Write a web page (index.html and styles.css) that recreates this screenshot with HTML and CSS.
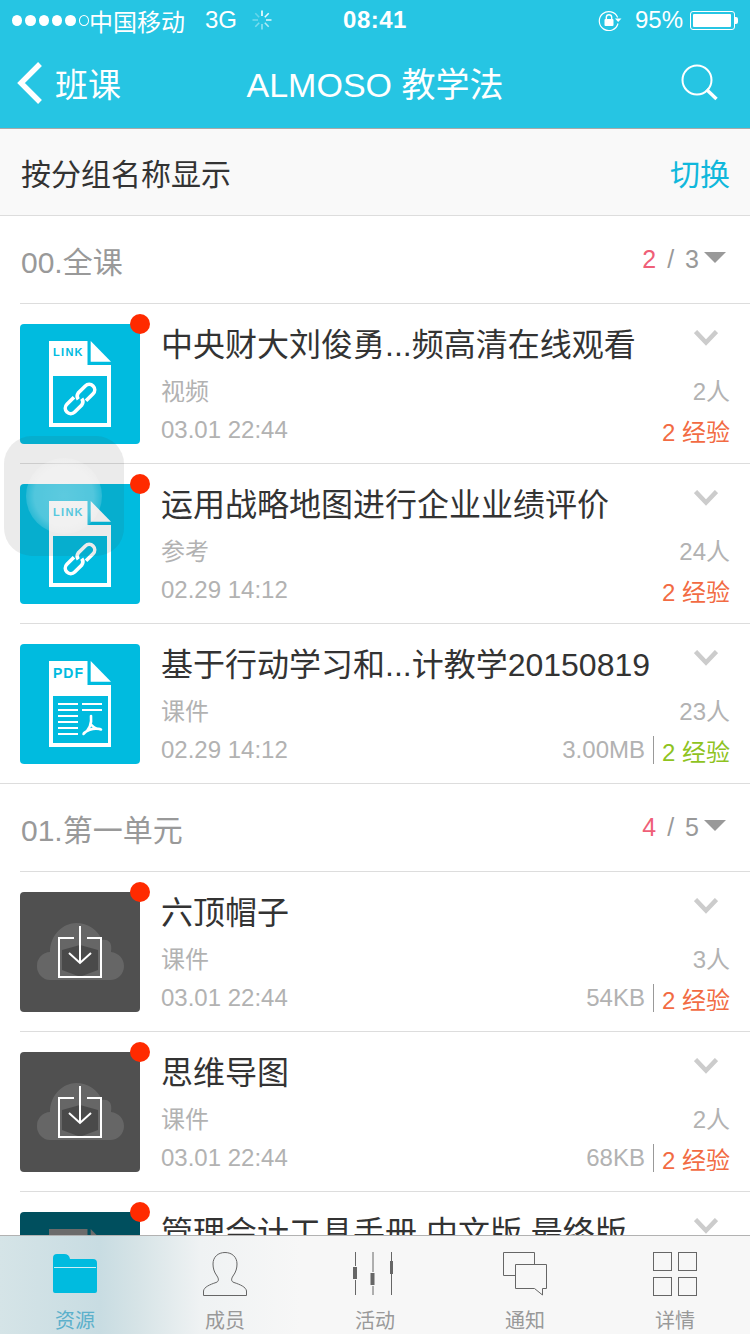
FILE: index.html
```html
<!DOCTYPE html>
<html lang="zh">
<head>
<meta charset="utf-8">
<title>ALMOSO 教学法</title>
<link rel="stylesheet" href="styles.css">
</head>
<body>
<svg class="defs" width="0" height="0" aria-hidden="true">
  <symbol id="link" viewBox="0 0 120 120">
    <path fill="#fff" d="M29 17H67.5V41H91V103H29z"/>
    <path fill="#fff" d="M70.7 17L91 37.7H70.7z"/>
    <rect x="33" y="52" width="54" height="47" fill="#00bbdf"/>
    <text x="33" y="32" class="ft ft-link">LINK</text>
    <g transform="translate(60 75) rotate(-45)" fill="none" stroke="#fff" stroke-width="3.6">
      <path d="M-3 -5.5H-13A5.5 5.5 0 0 0 -13 5.5H-3A5.5 5.5 0 0 0 1.5 1"/>
      <path d="M3 5.5H13A5.5 5.5 0 0 0 13 -5.5H3A5.5 5.5 0 0 0 -1.5 -1"/>
    </g>
  </symbol>
  <symbol id="pdf" viewBox="0 0 120 120">
    <path fill="#fff" d="M29 17H67.5V41H91V103H29z"/>
    <path fill="#fff" d="M70.7 17L91 37.7H70.7z"/>
    <rect x="33" y="52" width="55" height="47" fill="#00bbdf"/>
    <text x="33" y="34" class="ft ft-pdf">PDF</text>
    <path stroke="#fff" stroke-width="2" d="M38 60H58M62 60H82M38 66H58M62 66H82M38 72H58M38 78H58M38 84H58M38 90H58"/>
    <path fill="none" stroke="#fff" stroke-width="2.6" stroke-linecap="round" d="M71 72C72 80 69 86 63.5 90M71.5 81C74 84 77 85 81 85.5M64 89C69 85 75 84 80 85"/>
  </symbol>
  <symbol id="cloud" viewBox="0 0 120 120">
    <path fill="#666" d="M30 88A13.5 13.5 0 0 1 17 74 13.5 13.5 0 0 1 30 60C30 42 44 31 56 31 68 31 78 38 82 48 94 46 91 60 91 60 99 61 104 67 104 74 104 82 98 88 90 88z"/>
    <path fill="#4a4a4a" d="M42 58L60 53 78 58V78L62 84H58L42 78z"/>
    <path fill="none" stroke="#fff" stroke-width="2" d="M54 46H39V85H81V46H67"/>
    <path fill="none" stroke="#fff" stroke-width="2" d="M60 34V71M49 61L60 71 71 61"/>
  </symbol>
  <symbol id="chev" viewBox="0 0 24 16">
    <path fill="none" stroke="#ccc" stroke-width="4.5" d="M1.5 1.5L12 12.5 22.5 1.5"/>
  </symbol>
</svg>

<div class="screen">
  <header class="top">
    <div class="status">
      <div class="st-left">
        <span class="dots"><i></i><i></i><i></i><i></i><i></i><i class="off"></i></span>
        <span class="carrier">中国移动</span>
        <span class="net">3G</span>
        <svg class="spin" width="20" height="20" viewBox="0 0 20 20" fill="none" stroke="#fff" stroke-width="1.6">
          <path d="M10 0.5V6"/><path opacity=".9" d="M16.7 3.3L12.8 7.2"/><path opacity=".8" d="M19.5 10H14"/><path opacity=".65" d="M16.7 16.7L12.8 12.8"/><path opacity=".5" d="M10 19.5V14"/><path opacity=".4" d="M3.3 16.7L7.2 12.8"/><path opacity=".35" d="M0.5 10H6"/><path opacity=".3" d="M3.3 3.3L7.2 7.2"/>
        </svg>
      </div>
      <div class="st-time">08:41</div>
      <div class="st-right">
        <svg width="24" height="21" viewBox="0 0 24 21" fill="none">
          <path stroke="#fff" stroke-width="1.2" d="M20 13.5A9.5 9.5 0 1 1 19.6 7.5"/>
          <path fill="#fff" d="M17 8.5H23.5L20.2 12z"/>
          <rect x="6.5" y="9" width="9" height="7" rx="1" fill="#fff"/>
          <path stroke="#fff" stroke-width="1.4" d="M8.3 9.5V7.5A2.7 2.7 0 0 1 13.7 7.5V9.5"/>
        </svg>
        <span class="pct">95%</span>
        <span class="batt"><i></i></span>
      </div>
    </div>
    <nav class="nav">
      <div class="nav-left">
        <svg width="26" height="42" viewBox="0 0 26 42" fill="none"><path stroke="#fff" stroke-width="5.4" d="M23 2L4 21 23 40"/></svg>
        <span>班课</span>
      </div>
      <div class="nav-title">ALMOSO 教学法</div>
      <svg class="nav-search" width="37" height="37" viewBox="0 0 37 37" fill="none" stroke="#fff">
        <circle cx="16" cy="16" r="14.5" stroke-width="2"/>
        <path stroke-width="3.4" d="M25.5 25.5L35.5 35"/>
      </svg>
    </nav>
  </header>

  <div class="filter">
    <span>按分组名称显示</span>
    <span class="switch">切换</span>
  </div>

  <section class="section">
    <div class="sec-head">
      <span class="sec-name">00.全课</span>
      <span class="sec-count"><b>2</b><em>/</em>3<i class="tri"></i></span>
    </div>
    <article class="row">
      <div class="thumb"><svg class="art"><use href="#link"/></svg><i class="dot"></i></div>
      <div class="body">
        <div class="line l1"><span class="title">中央财大刘俊勇...频高清在线观看</span><svg class="chev"><use href="#chev"/></svg></div>
        <div class="line l2"><span>视频</span><span>2人</span></div>
        <div class="line l3"><span>03.01 22:44</span><span class="meta"><span class="xp">2 经验</span></span></div>
      </div>
    </article>
    <article class="row">
      <div class="thumb"><svg class="art"><use href="#link"/></svg><i class="dot"></i></div>
      <div class="body">
        <div class="line l1"><span class="title">运用战略地图进行企业业绩评价</span><svg class="chev"><use href="#chev"/></svg></div>
        <div class="line l2"><span>参考</span><span>24人</span></div>
        <div class="line l3"><span>02.29 14:12</span><span class="meta"><span class="xp">2 经验</span></span></div>
      </div>
    </article>
    <article class="row">
      <div class="thumb"><svg class="art"><use href="#pdf"/></svg></div>
      <div class="body">
        <div class="line l1"><span class="title">基于行动学习和...计教学20150819</span><svg class="chev"><use href="#chev"/></svg></div>
        <div class="line l2"><span>课件</span><span>23人</span></div>
        <div class="line l3"><span>02.29 14:12</span><span class="meta"><span class="size">3.00MB</span><span class="xp green">2 经验</span></span></div>
      </div>
    </article>
  </section>

  <section class="section">
    <div class="sec-head">
      <span class="sec-name">01.第一单元</span>
      <span class="sec-count"><b>4</b><em>/</em>5<i class="tri"></i></span>
    </div>
    <article class="row">
      <div class="thumb dark"><svg class="art"><use href="#cloud"/></svg><i class="dot"></i></div>
      <div class="body">
        <div class="line l1"><span class="title">六顶帽子</span><svg class="chev"><use href="#chev"/></svg></div>
        <div class="line l2"><span>课件</span><span>3人</span></div>
        <div class="line l3"><span>03.01 22:44</span><span class="meta"><span class="size">54KB</span><span class="xp">2 经验</span></span></div>
      </div>
    </article>
    <article class="row">
      <div class="thumb dark"><svg class="art"><use href="#cloud"/></svg><i class="dot"></i></div>
      <div class="body">
        <div class="line l1"><span class="title">思维导图</span><svg class="chev"><use href="#chev"/></svg></div>
        <div class="line l2"><span>课件</span><span>2人</span></div>
        <div class="line l3"><span>03.01 22:44</span><span class="meta"><span class="size">68KB</span><span class="xp">2 经验</span></span></div>
      </div>
    </article>
    <article class="row">
      <div class="thumb teal">
        <svg class="art" viewBox="0 0 120 120"><path fill="#6b6b6b" d="M29 17H67.5V41H91V103H29z"/><path fill="#6b6b6b" d="M70.7 17L91 37.7H70.7z"/></svg>
        <i class="dot"></i>
      </div>
      <div class="body">
        <div class="line l1"><span class="title">管理会计工具手册 中文版 最终版</span><svg class="chev"><use href="#chev"/></svg></div>
      </div>
    </article>
  </section>

  <div class="assist"><i></i></div>

  <footer class="tabs">
    <div class="tab active">
      <svg width="44" height="44" viewBox="0 0 44 44">
        <path fill="#00bbdf" d="M0 6A4 4 0 0 1 4 2H11A6 6 0 0 1 17 7H40A4 4 0 0 1 44 11V39A2 2 0 0 1 42 41H2A2 2 0 0 1 0 39z"/>
        <path stroke="#cdeef5" stroke-width="1" d="M1 15.500H43"/>
      </svg>
      <span>资源</span>
    </div>
    <div class="tab">
      <svg width="44" height="44" viewBox="0 0 44 44" fill="none" stroke="#666" stroke-width="1">
        <path d="M0.500 43.500V39C1 35 7 32.500 13 30.500 16 29.500 16 27 14 24 11 20 10 16 10 12 10 5 15 0.500 22 0.500 29 0.500 34 5 34 12 34 16 33 20 30 24 28 27 28 29.500 31 30.500 37 32.500 43 35 43.500 39V43.500z"/>
      </svg>
      <span>成员</span>
    </div>
    <div class="tab">
      <svg width="44" height="44" viewBox="0 0 44 44" fill="none" stroke="#666" stroke-width="1">
        <path d="M2.500 0V14M2.500 28V43M20 0V20M20 34V43M38.500 0V9M38.500 22V43"/>
        <path fill="#666" stroke="none" d="M0 15H4V27H0zM17.500 21H21.500V33H17.500zM37 9H40V22H37z"/>
      </svg>
      <span>活动</span>
    </div>
    <div class="tab">
      <svg width="44" height="44" viewBox="0 0 44 44" fill="none" stroke="#666" stroke-width="1">
        <path d="M12 23.500H0.500V0.500H31.500V12"/>
        <path d="M12.500 12.500H43.500V36.500H39.500V43L31.500 36.500H12.500z"/>
      </svg>
      <span>通知</span>
    </div>
    <div class="tab">
      <svg width="44" height="44" viewBox="0 0 44 44" fill="none" stroke="#666" stroke-width="1">
        <rect x="0.500" y="0.500" width="18" height="18"/><rect x="25.500" y="0.500" width="18" height="18"/>
        <rect x="0.500" y="25.500" width="18" height="18"/><rect x="25.500" y="25.500" width="18" height="18"/>
      </svg>
      <span>详情</span>
    </div>
  </footer>
</div>
</body>
</html>
```

FILE: styles.css
```css
* { box-sizing: border-box; }
html, body { margin: 0; padding: 0; }
body {
  width: 750px;
  height: 1334px;
  overflow: hidden;
  background: #fff;
  font-family: "Liberation Sans", "Noto Sans CJK SC", sans-serif;
}
.defs { position: absolute; }
.screen { position: relative; width: 750px; height: 1334px; overflow: hidden; background: #fff; }

.top { background: #26c5e3; color: #fff; border-bottom: 1px solid #a9a9a9; }
.status { height: 40px; display: flex; align-items: center; justify-content: space-between; padding: 0 12px 0 12px; font-size: 24px; }
.st-left, .st-right { flex: 1; display: flex; align-items: center; }
.st-right { justify-content: flex-end; }
.dots { display: flex; gap: 3px; width: 77px; }
.dots i { width: 11px; height: 11px; border-radius: 50%; background: #fff; }
.dots i.off { background: none; border: 1px solid #fff; }
.carrier { margin-left: 0; }
.net { margin-left: 20px; }
.spin { margin-left: 15px; }
.st-time { font-weight: 700; letter-spacing: 0.5px; font-size: 24px; }
.pct { margin-left: 13px; }
.batt { position: relative; width: 45px; height: 19px; margin-left: 7px; margin-right: 3px; border: 1px solid #fff; border-radius: 3px; padding: 2px; }
.batt i { display: block; width: 38px; height: 13px; background: #fff; border-radius: 1px; }
.batt::after { content: ""; position: absolute; right: -4px; top: 5px; width: 3px; height: 7px; background: #fff; border-radius: 0 2px 2px 0; }

.nav { height: 88px; display: flex; align-items: center; justify-content: space-between; padding: 0 32px 3px 17px; position: relative; }
.nav-left { display: flex; align-items: center; gap: 12px; font-size: 33px; }
.nav-title { position: absolute; left: 0; right: 0; text-align: center; font-size: 34px; pointer-events: none; }
.nav-search { display: block; }

.filter { height: 87px; display: flex; align-items: center; justify-content: space-between; padding: 0 20px 0 21px; background: #f9f9f9; border-bottom: 1px solid #ddd; font-size: 30px; color: #333; }
.switch { color: #10b8dc; }

.section { border-bottom: 1px solid #ddd; }
.section:last-of-type { border-bottom: 0; }
.sec-head { height: 88px; margin-left: 20px; padding-right: 24px; border-bottom: 1px solid #ddd; display: flex; align-items: center; justify-content: space-between; }
.sec-name { margin-left: 1px; font-size: 30px; color: #999; }
.sec-count { display: flex; align-items: center; font-size: 25px; color: #999; }
.sec-count b { font-weight: 400; color: #ef5f78; }
.sec-count em { font-style: normal; margin: 0 11px; }
.tri { width: 0; height: 0; margin-left: 5px; margin-top: -5px; border-left: 11px solid transparent; border-right: 11px solid transparent; border-top: 11px solid #999; }

.row { height: 160px; margin-left: 20px; padding: 20px 20px 0 0; border-bottom: 1px solid #ddd; display: flex; }
.row:last-child { border-bottom: 0; }
.section .row:nth-last-child(1) { height: 159px; }
.thumb { position: relative; flex: none; width: 120px; height: 120px; border-radius: 4px; background: #00bbdf; }
.thumb.dark { background: #505050; }
.thumb.teal { background: #004f5e; }
.art { display: block; width: 120px; height: 120px; }
.dot { position: absolute; right: -10px; top: -10px; width: 20px; height: 20px; border-radius: 50%; background: #ff2a00; }
.ft { fill: #00bbdf; font-family: "Liberation Sans", sans-serif; font-weight: 700; }
.ft-link { font-size: 11px; letter-spacing: 1.3px; }
.ft-pdf { font-size: 14px; letter-spacing: 1px; }

.body { flex: 1; min-width: 0; margin-left: 21px; margin-top: -2px; }
.line { display: flex; justify-content: space-between; align-items: center; height: 40px; font-size: 24px; color: #b2b2b2; white-space: nowrap; }
.l2 { margin-top: 7px; }
.l3 { margin-top: 1px; }
.title { font-size: 32px; color: #333; }
.chev { flex: none; width: 24px; height: 16px; margin: -8px 12px 0 0; }
.meta { display: flex; align-items: center; }
.size { padding-right: 8px; margin-right: 8px; position: relative; border-right: 1px solid #999; line-height: 28px; }
.xp { color: #f26b43; }
.xp.green { color: #8fc31f; }

.assist { position: absolute; left: 4px; top: 436px; width: 120px; height: 120px; border-radius: 28px; background: rgba(60, 60, 60, 0.1); display: flex; align-items: center; justify-content: center; }
.assist i { width: 76px; height: 76px; border-radius: 50%; background: radial-gradient(circle, rgba(255,255,255,.35) 0, rgba(255,255,255,.3) 55%, rgba(255,255,255,.1) 75%, rgba(255,255,255,.04) 100%); }

.tabs { position: absolute; left: 0; right: 0; bottom: 0; height: 99px; padding-top: 16px; display: flex; border-top: 1px solid #b2b2b2; background: linear-gradient(90deg, #d5e4e7 0, #c8dce2 100px, #d5e3e6 135px, #eff2f3 200px, #f7f7f7 300px, #f7f7f7 100%); }
.tab { flex: 1; display: flex; flex-direction: column; align-items: center; font-size: 20px; color: #999; }
.tab svg { display: block; flex: none; }
.tab span { margin-top: 12px; line-height: 26px; }
.tab.active { color: #5cb0cb; }
```
